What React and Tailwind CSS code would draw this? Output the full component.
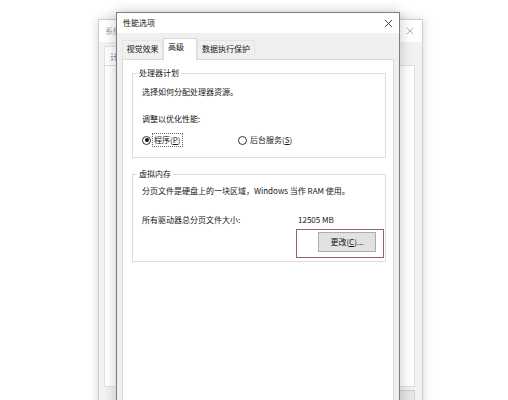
import React from 'react';

function CloseX({ className }) {
  return (
    <svg viewBox="0 0 10 10" className={className} fill="none" stroke="currentColor" strokeWidth="1">
      <path d="M1 1L9 9M9 1L1 9" />
    </svg>
  );
}

function Radio({ checked, label, hotkey, focused, className = '' }) {
  return (
    <label className={`flex items-center gap-[2px] ${className}`}>
      <span className="flex h-[9px] w-[9px] items-center justify-center rounded-full border border-[#333] bg-white">
        {checked && <span className="h-[4px] w-[4px] rounded-full bg-[#111]" />}
      </span>
      <span className={focused ? 'px-px outline-1 outline-dotted outline-[#666]' : 'px-px'}>
        {label}(<span className="underline">{hotkey}</span>)
      </span>
    </label>
  );
}

export default function App() {
  return (
    <div className="relative h-[400px] w-[508px] overflow-hidden bg-white font-['Noto_Sans_CJK_SC','Noto_Sans',sans-serif] text-[8px] leading-[12px] text-[#161616]">
      {/* inactive window behind: 系统属性, mostly hidden by the dialog */}
      <div className="absolute left-[98px] top-[19px] flex h-[400px] w-[325px] flex-col border border-[#cdcdcd] bg-[#f2f2f2] shadow-[0_0_10px_rgba(0,0,0,0.16)]">
        <div className="flex h-[22px] items-center justify-between bg-white pl-[6px] pr-[8px] text-[#a0a0a0]">
          <span className="w-[11px] overflow-hidden whitespace-nowrap">系统属性</span>
          <CloseX className="h-[8px] w-[8px] text-[#9a9a9a]" />
        </div>
        <div className="flex flex-1 flex-col pl-[5px] pr-[7px] pt-[4px]">
          <div className="flex">
            <div className="-mb-px flex h-[20px] w-[13px] items-center overflow-hidden whitespace-nowrap border border-b-0 border-r-0 border-[#e2e2e2] bg-white pl-[5px] text-[#8a8a8a]">
              计算机名
            </div>
          </div>
          <div className="h-[322px] border border-[#e0e0e0] bg-white" />
          <div className="flex justify-end gap-[6px] pt-[3px]">
            <div className="h-[16px] w-[40px] border border-[#cfcfcf] bg-[#e6e6e6]" />
            <div className="h-[16px] w-[40px] border border-[#cfcfcf] bg-[#e6e6e6]" />
          </div>
        </div>
      </div>

      {/* active dialog: 性能选项 */}
      <div className="absolute left-[116px] top-[12px] flex h-[400px] w-[284px] flex-col border border-[#7d7d7d] bg-[#f0f0f0] shadow-[0_0_12px_rgba(0,0,0,0.22)]">
        <div className="flex h-[20px] items-center justify-between bg-white px-[6px]">
          <span>性能选项</span>
          <CloseX className="h-[9px] w-[9px] text-[#333]" />
        </div>

        <div className="flex flex-1 flex-col px-[5px] pt-[5px]">
          <div className="flex items-end">
            <div className="flex h-[19px] w-[41px] items-center justify-center border border-b-0 border-[#e4e4e4] pb-[3px]">视觉效果</div>
            <div className="relative z-10 -mb-px flex h-[22px] w-[34px] items-center border border-b-0 border-[#d9d9d9] bg-white pb-[5px] pl-[4px]">
              高级
            </div>
            <div className="flex h-[19px] w-[58px] items-center border border-b-0 border-[#e4e4e4] pb-[3px] pl-[4px]">数据执行保护</div>
          </div>

          <div className="flex-1 border border-[#d9d9d9] bg-white pl-[9px] pr-[7px] pt-[7px]">
            <fieldset className="border border-[#dcdcdc] pb-[11px]">
              <legend className="ml-[4px] px-[2px]">处理器计划</legend>
              <div className="pl-[9px]">
                <p className="mt-[7px]">选择如何分配处理器资源。</p>
                <p className="mt-[15px]">调整以优化性能:</p>
                <div className="mt-[9px] flex">
                  <Radio checked focused label="程序" hotkey="P" className="w-[96px]" />
                  <Radio label="后台服务" hotkey="S" />
                </div>
              </div>
            </fieldset>

            <fieldset className="mt-[10px] border border-[#dcdcdc] pb-[3px]">
              <legend className="ml-[4px] px-[2px]">虚拟内存</legend>
              <div className="pl-[9px] pr-px">
                <p className="mt-[5px]">分页文件是硬盘上的一块区域，Windows 当作 RAM 使用。</p>
                <div className="mt-[17px] flex">
                  <span className="w-[156px]">所有驱动器总分页文件大小:</span>
                  <span>12505 MB</span>
                </div>
                <div className="mt-[3px] flex justify-end">
                  <div className="border-[1.5px] border-[#9a6262] pb-[5px] pl-[21px] pr-[7px] pt-[2px]">
                    <button
                      type="button"
                      className="flex h-[20px] w-[58px] items-center justify-center border border-[#adadad] bg-[#e1e1e1]"
                    >
                      更改(<span className="underline">C</span>)...
                    </button>
                  </div>
                </div>
              </div>
            </fieldset>
          </div>
        </div>
      </div>
    </div>
  );
}
